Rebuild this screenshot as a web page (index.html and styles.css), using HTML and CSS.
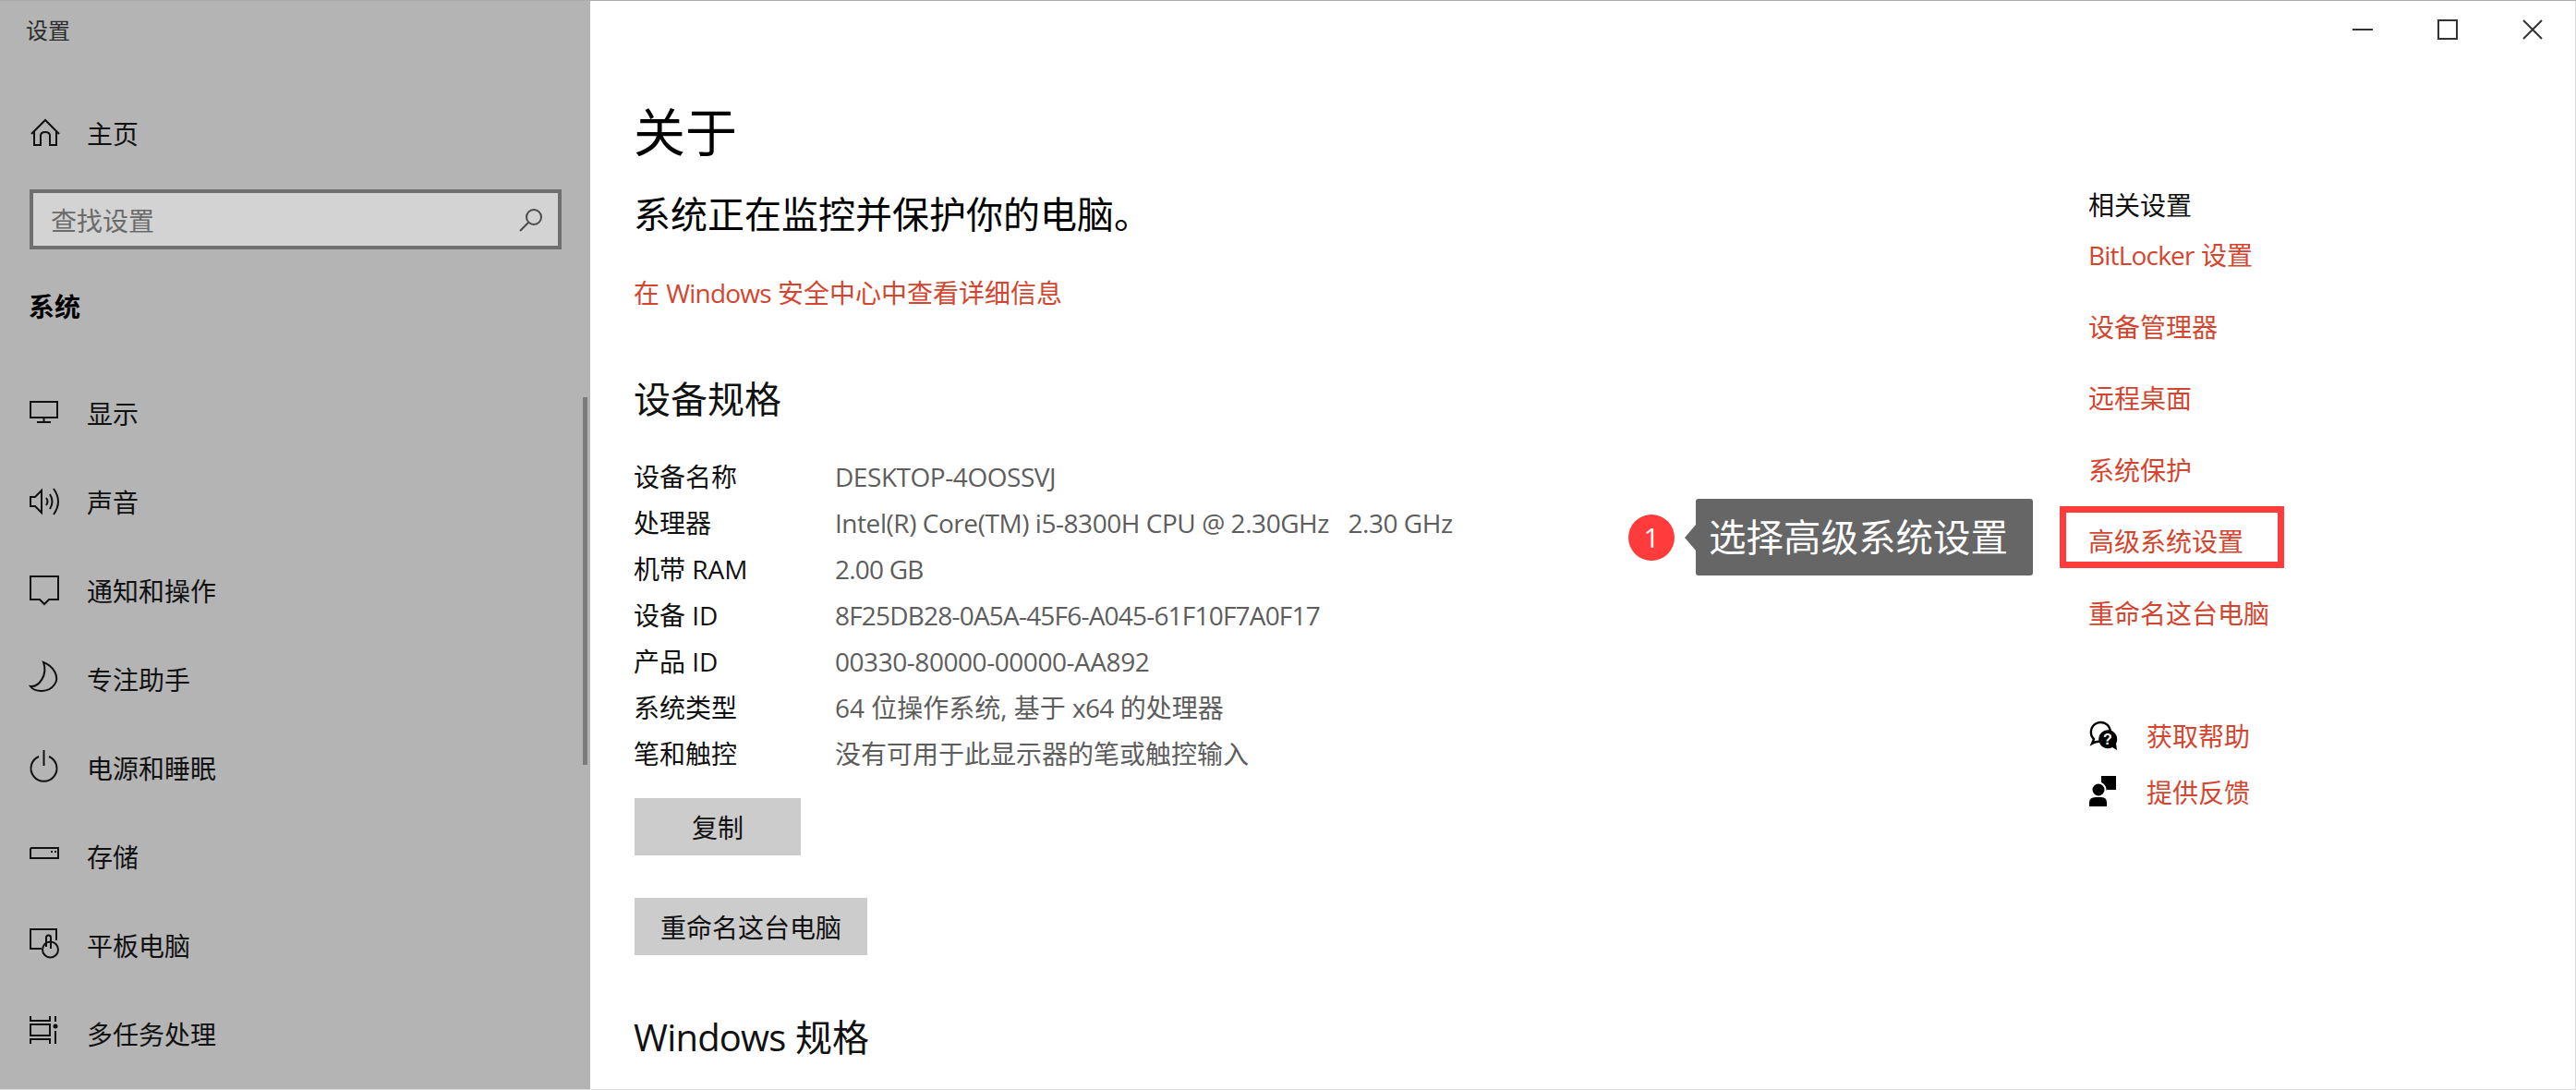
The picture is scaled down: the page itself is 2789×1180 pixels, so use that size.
FILE: index.html
```html
<!DOCTYPE html>
<html lang="zh-CN">
<head>
    <meta charset="utf-8">
    <title>设置</title>
    <link rel="stylesheet" href="styles.css">
</head>
<body>
<div class="window">
    <aside class="sidebar">
        <div class="app-title">设置</div>
        <div class="nav-item home">
            <svg class="icon" viewBox="0 0 32 32"><path d="M2 17 17 2 32 17M5 14V29H12V19Q12 15 17 15 22 15 22 19V29H29V14"/></svg>
            <span>主页</span>
        </div>
        <div class="search">
            <span>查找设置</span>
            <svg class="search-icon" viewBox="0 0 26 26"><circle cx="16" cy="10" r="8"/><path d="M10 16 1 25"/></svg>
        </div>
        <div class="section-label">系统</div>
        <ul class="nav">
            <li class="nav-item">
                <svg class="icon" viewBox="0 0 32 32"><path d="M1 4H30V21H1ZM15.5 21V25M8 26H23"/></svg>
                <span>显示</span>
            </li>
            <li class="nav-item">
                <svg class="icon" viewBox="0 0 32 32"><path d="M1 11H6L13 4V28L6 21H1ZM18 12Q21 16 18 20M22 8Q27 16 22 24M26 2Q36 16 26 30"/></svg>
                <span>声音</span>
            </li>
            <li class="nav-item">
                <svg class="icon" viewBox="0 0 32 32"><path d="M1 1H31V26H21L16 31 11 26H1Z"/></svg>
                <span>通知和操作</span>
            </li>
            <li class="nav-item">
                <svg class="icon" viewBox="0 2 32 32"><path d="M15 0C26 4 33 16 27 24 21 33 6 33 1 26 10 27 20 14 15 0Z"/></svg>
                <span>专注助手</span>
            </li>
            <li class="nav-item">
                <svg class="icon" viewBox="0 0 32 32"><path d="M10 4A14 14 0 1 0 21 4M15.5 -3V14"/></svg>
                <span>电源和睡眠</span>
            </li>
            <li class="nav-item">
                <svg class="icon" viewBox="0 0 32 32"><path d="M2 7H31V18H1V8Z"/><path d="M23 11H25M27 11H29"/></svg>
                <span>存储</span>
            </li>
            <li class="nav-item">
                <svg class="icon" viewBox="0 0 32 32"><path d="M13 20H1V-1H29V11"/><circle cx="22.5" cy="21" r="8.5"/><path d="M18 18V8A2.5 2.5 0 0 1 23 8V20"/></svg>
                <span>平板电脑</span>
            </li>
            <li class="nav-item">
                <svg class="icon" viewBox="0 4 32 32"><path d="M1 1V6H22V1M1 10H22V22H1ZM1 31V26H22V31M28 1V7M28 17V31"/><circle class="solid" cx="28" cy="12" r="2.5"/></svg>
                <span>多任务处理</span>
            </li>
        </ul>
        <div class="scrollbar"></div>
    </aside>

    <main class="main">
        <div class="caption">
            <div class="caption-btn"><svg viewBox="0 0 22 22"><path d="M0 11H22"/></svg></div>
            <div class="caption-btn"><svg viewBox="0 0 22 22"><path d="M1 1H21V21H1Z"/></svg></div>
            <div class="caption-btn"><svg viewBox="0 0 22 22"><path d="M1 1 21 21M21 1 1 21"/></svg></div>
        </div>
        <div class="body">
            <section class="content">
                <h1>关于</h1>
                <p class="status">系统正在监控并保护你的电脑。</p>
                <a class="link detail">在 <span class="latin">Windows</span> 安全中心中查看详细信息</a>
                <h2 class="spec-title">设备规格</h2>
                <dl class="specs">
                    <div><dt>设备名称</dt><dd class="tight">DESKTOP-4OOSSVJ</dd></div>
                    <div><dt>处理器</dt><dd class="tight">Intel(R) Core(TM) i5-8300H CPU @ 2.30GHz&nbsp;&nbsp; 2.30 GHz</dd></div>
                    <div><dt>机带 RAM</dt><dd class="tighter">2.00 GB</dd></div>
                    <div><dt>设备 ID</dt><dd class="tighter">8F25DB28-0A5A-45F6-A045-61F10F7A0F17</dd></div>
                    <div><dt>产品 ID</dt><dd class="tight">00330-80000-00000-AA892</dd></div>
                    <div><dt>系统类型</dt><dd>64 位操作系统, 基于 <span class="latin">x64</span> 的处理器</dd></div>
                    <div><dt>笔和触控</dt><dd>没有可用于此显示器的笔或触控输入</dd></div>
                </dl>
                <button class="btn copy">复制</button>
                <button class="btn rename">重命名这台电脑</button>
                <h2 class="win-title"><span class="latin">Windows</span> 规格</h2>
            </section>

            <section class="related">
                <h3>相关设置</h3>
                <ul>
                    <li><a class="link"><span class="latin">BitLocker</span> 设置</a></li>
                    <li><a class="link">设备管理器</a></li>
                    <li><a class="link">远程桌面</a></li>
                    <li><a class="link">系统保护</a></li>
                    <li class="marked"><a class="link">高级系统设置</a></li>
                    <li><a class="link">重命名这台电脑</a></li>
                </ul>
                <div class="help">
                    <div class="help-row">
                        <svg class="help-icon" viewBox="0 0 32 32">
                            <path class="outline" d="M4 25 6 20A10.5 10.5 0 1 1 14 23Q9 22 4 25Z"/>
                            <path d="M31 32 26 29A10 10 0 1 1 30 25Z"/>
                            <text x="21" y="26" class="qmark">?</text>
                        </svg>
                        <a class="link">获取帮助</a>
                    </div>
                    <div class="help-row">
                        <svg class="help-icon" viewBox="0 0 32 34">
                            <path d="M14 0H30V15H20L17 18V13H14Z"/>
                            <circle class="halo" cx="11" cy="15" r="7.5"/>
                            <path d="M1 33V29Q1 23 8 23H14Q20 23 20 29V33Z"/>
                        </svg>
                        <a class="link">提供反馈</a>
                    </div>
                </div>
            </section>
        </div>
    </main>

    <div class="callout">
        <span class="badge">1</span>
        <span class="bubble">选择高级系统设置</span>
    </div>
</div>
</body>
</html>
```

FILE: styles.css
```css
* {
    box-sizing: border-box;
}

html, body {
    margin: 0;
    padding: 0;
    background: #fff;
}

body {
    font-family: "Open Sans", "Noto Sans CJK SC", sans-serif;
    font-size: 28px;
    color: #111;
}

ul, dl, dd, h1, h2, h3, p {
    margin: 0;
    padding: 0;
    font-weight: normal;
}

ul {
    list-style: none;
}

.latin {
    letter-spacing: -0.8px;
}

.window {
    position: relative;
    display: flex;
    width: 2789px;
    height: 1180px;
    overflow: hidden;
    border-top: 1px solid #ababab;
    border-right: 1px solid #dcdcdc;
    border-bottom: 1px solid #dcdcdc;
}

/* sidebar */
.sidebar {
    position: relative;
    flex: none;
    width: 639px;
    background: #b4b4b4;
}

.app-title {
    height: 65px;
    padding-left: 28px;
    font-size: 24px;
    line-height: 64px;
    color: #2b2b2b;
}

.nav-item {
    display: flex;
    align-items: center;
    height: 96px;
    padding-left: 32px;
}

.home {
    margin-top: 30px;
}

.icon {
    flex: none;
    width: 32px;
    height: 32px;
    margin-right: 30px;
    overflow: visible;
    fill: none;
    stroke: #111;
    stroke-width: 2;
}

.icon .solid {
    fill: #111;
    stroke: none;
}

.search {
    display: flex;
    align-items: center;
    justify-content: space-between;
    width: 576px;
    height: 65px;
    margin: 13px 0 0 32px;
    padding: 0 16px 0 19px;
    background: #d3d3d3;
    border: 4px solid #6f6f6f;
    color: #6b6b6b;
}

.search-icon {
    width: 26px;
    height: 26px;
    fill: none;
    stroke: #4a4a4a;
    stroke-width: 2;
}

.section-label {
    height: 40px;
    margin-top: 42px;
    padding-left: 31px;
    font-weight: bold;
    line-height: 40px;
    color: #000;
}

.nav {
    margin-top: 47px;
}

.scrollbar {
    position: absolute;
    top: 429px;
    left: 631px;
    width: 5px;
    height: 398px;
    background: #7c7c7c;
}

/* main pane */
.main {
    flex: 1;
    min-width: 0;
}

.caption {
    display: flex;
    justify-content: flex-end;
    height: 61px;
}

.caption-btn {
    display: flex;
    align-items: center;
    justify-content: center;
    width: 92px;
}

.caption-btn svg {
    width: 22px;
    height: 22px;
    fill: none;
    stroke: #333;
    stroke-width: 2;
}

.body {
    display: flex;
    padding-left: 47px;
}

.content {
    flex: none;
    width: 1575px;
}

h1 {
    height: 80px;
    margin-top: 40px;
    font-size: 56px;
    line-height: 80px;
    color: #000;
}

.status {
    height: 56px;
    margin-top: 22px;
    font-size: 40px;
    line-height: 56px;
    color: #000;
}

.link {
    color: #d4452f;
}

.detail {
    display: block;
    height: 40px;
    margin-top: 37px;
    line-height: 40px;
}

h2 {
    height: 56px;
    font-size: 40px;
    line-height: 56px;
    color: #111;
}

.spec-title {
    margin-top: 67px;
}

.specs {
    margin-top: 31px;
}

.specs div {
    display: flex;
    height: 50px;
    line-height: 50px;
}

.specs dt {
    width: 218px;
}

.specs dd {
    color: #5d5d5d;
}

.tight {
    letter-spacing: -0.45px;
}

.tighter {
    letter-spacing: -0.8px;
}

.btn {
    display: block;
    height: 62px;
    margin-left: 1px;
    border: 0;
    padding: 0;
    background: #ccc;
    font: inherit;
    color: #111;
}

.copy {
    width: 180px;
    margin-top: 23px;
}

.rename {
    width: 252px;
    margin-top: 46px;
}

.win-title {
    margin-top: 61px;
}

.related {
    flex: 1;
    padding-top: 140px;
}

.related h3 {
    height: 40px;
    font-size: 28px;
    line-height: 40px;
}

.related ul {
    margin-top: 14px;
}

.related li {
    position: relative;
    height: 77.6px;
    line-height: 40px;
}

.marked::after {
    content: "";
    box-sizing: border-box;
    position: absolute;
    top: -18px;
    left: -31px;
    width: 243px;
    height: 67px;
    border: 7px solid #ff3b3b;
}

.help {
    margin-top: 44px;
}

.help-row {
    display: flex;
    align-items: center;
    height: 61px;
}

.help-icon {
    flex: none;
    width: 32px;
    height: 34px;
    margin-right: 31px;
    fill: #000;
}

.help-icon .outline {
    fill: #fff;
    stroke: #000;
    stroke-width: 2.4;
}

.help-icon .halo {
    stroke: #fff;
    stroke-width: 2;
}

.qmark {
    font-family: "Liberation Sans", sans-serif;
    font-size: 16px;
    font-weight: bold;
    fill: #fff;
    text-anchor: middle;
}

/* annotation over the page */
.callout {
    position: absolute;
    top: 539px;
    left: 1763px;
    display: flex;
    align-items: center;
}

.badge {
    width: 50px;
    height: 50px;
    margin-right: 23px;
    border-radius: 50%;
    background: #ff3b3b;
    color: #fff;
    font-size: 30px;
    line-height: 50px;
    text-align: center;
}

.bubble {
    position: relative;
    width: 365px;
    height: 83px;
    padding-left: 14px;
    border-radius: 3px;
    background: #666;
    color: #fff;
    font-size: 40.5px;
    line-height: 83px;
    white-space: nowrap;
}

.bubble::before {
    content: "";
    position: absolute;
    top: 28px;
    left: -12px;
    border-top: 14px solid transparent;
    border-bottom: 14px solid transparent;
    border-right: 12px solid #666;
}
```
